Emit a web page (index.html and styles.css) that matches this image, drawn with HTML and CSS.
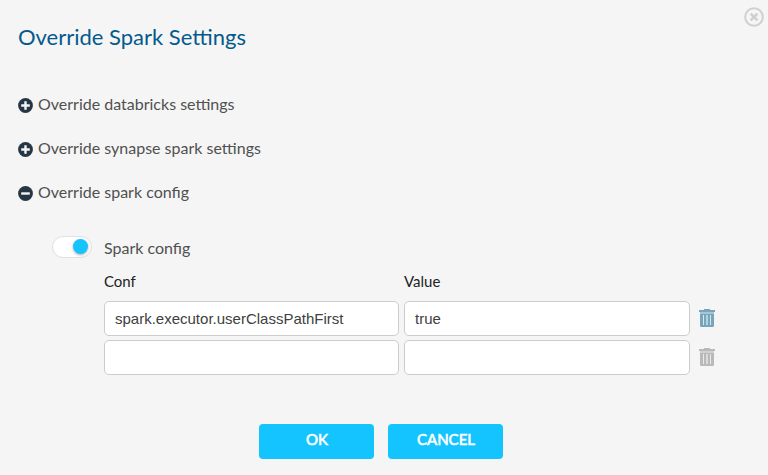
FILE: index.html
```html
<!DOCTYPE html>
<html lang="en"><head><meta charset="utf-8"><title>Override Spark Settings</title><link rel="stylesheet" href="styles.css"></head>
<body>
<main class="dialog">
<button class="close" aria-label="Close"><svg width="20" height="20" viewBox="0 0 20 20"><circle cx="10" cy="10" r="8.8"/><path d="M6.6 6.6l6.800 6.800M13.400 6.600l-6.800 6.800"/></svg></button>
<h1>Override Spark Settings</h1>
<section class="sections">
<div class="section"><svg class="mark" viewBox="0 0 15 15"><circle cx="7.5" cy="7.5" r="7.4"/><path d="M3.2 7.5h8.6M7.5 3.2v8.6"/></svg><span>Override databricks settings</span></div>
<div class="section"><svg class="mark" viewBox="0 0 15 15"><circle cx="7.5" cy="7.5" r="7.4"/><path d="M3.2 7.5h8.6M7.5 3.2v8.6"/></svg><span>Override synapse spark settings</span></div>
<div class="section"><svg class="mark" viewBox="0 0 15 15"><circle cx="7.5" cy="7.5" r="7.4"/><path d="M3.2 7.5h8.6"/></svg><span>Override spark config</span></div>
</section>
<div class="config">
<div class="toggle"><i></i></div>
<div class="config-body">
<div class="label">Spark config</div>
<div class="row heads"><span>Conf</span><span>Value</span></div>
<div class="row"><input value="spark.executor.userClassPathFirst"><input value="true"><svg class="trash" viewBox="0 0 16 18"><path d="M5 0h6v1h5v2H0V1h5z"/><path class="rim" d="M1 3h14v2H1z"/><path d="M1 5h14v11.500q0 1.500-1.500 1.500h-11q-1.500 0-1.500-1.500z"/><path class="slots" d="M4.500 6v10M11.500 6v10"/><path class="slots middle" d="M8 6v10"/></svg></div>
<div class="row"><input><input><svg class="trash off" viewBox="0 0 16 18"><path d="M5 0h6v1h5v2H0V1h5z"/><path class="rim" d="M1 3h14v2H1z"/><path d="M1 5h14v11.500q0 1.500-1.500 1.500h-11q-1.500 0-1.500-1.500z"/><path class="slots" d="M4.500 6v10M11.500 6v10"/><path class="slots middle" d="M8 6v10"/></svg></div>
</div>
</div>
<footer><button>OK</button><button>CANCEL</button></footer>
</main>
</body></html>
```
FILE: styles.css
```css
* { box-sizing: border-box; }
body { margin: 0; background: #f5f5f5; font-family: Lato, sans-serif; color: #505050; }
.dialog { position: relative; height: 475px; padding: 23px 18px 0; overflow: hidden; }
.close { position: absolute; top: 7px; right: 4px; width: 20px; height: 20px; padding: 0; border: 0; background: none; }
.close svg { display: block; fill: none; stroke: #d0d0d0; stroke-width: 2; }
.close path { stroke-width: 2.6; }
h1 { margin: 0; font-size: 22px; line-height: 27px; font-weight: 400; color: #045a8d; }
.sections { margin-top: 44px; }
.section { display: flex; align-items: center; gap: 5px; height: 20px; margin-bottom: 24px; font-size: 16px; line-height: 20px; }
.mark { width: 15px; height: 15px; margin-top: 2px; fill: #263645; stroke: #f5f5f5; stroke-width: 2.4; }
.mark circle { stroke: none; }
.config { display: flex; margin: 34px 0 0 34px; gap: 12px; }
.toggle { width: 40px; height: 22px; padding: 2px 3px; display: flex; justify-content: flex-end; border: 1px solid #e0e0e0; border-radius: 11px; background: #fff; }
.toggle i { width: 15px; height: 15px; border-radius: 50%; background: #14c4ff; box-shadow: 0 1px 3px #0005; }
.label { padding-top: 2px; font-size: 16px; line-height: 20px; }
.row { display: grid; grid-template-columns: 295px 286px 16px; column-gap: 5px; margin-bottom: 4px; align-items: center; }
.heads { margin: 14px 0 10px; font-size: 15px; line-height: 19px; color: #222; }
input { width: 100%; height: 35px; padding: 0 10px; border: 1px solid #ccc; border-radius: 5px; background: #fff; font: 15px "Liberation Sans", sans-serif; color: #404040; }
.trash { width: 16px; height: 18px; margin: -1px 0 0 4px; fill: #76a5be; }
.trash.off { fill: #b9b9b9; }
.rim { opacity: .6; }
.slots { stroke: #f5f5f5; stroke-width: 1; stroke-opacity: .8; fill: none; }
.middle { stroke-width: 2; stroke-opacity: .55; }
footer { display: flex; gap: 14px; margin: 45px 0 0 241px; }
footer button { width: 115px; height: 35px; padding: 0 0 6px 1px; border: 0; border-radius: 4px; background: #14c4ff; color: #fff; font: 400 15px Lato, sans-serif; -webkit-text-stroke: .6px #fff; }
```
